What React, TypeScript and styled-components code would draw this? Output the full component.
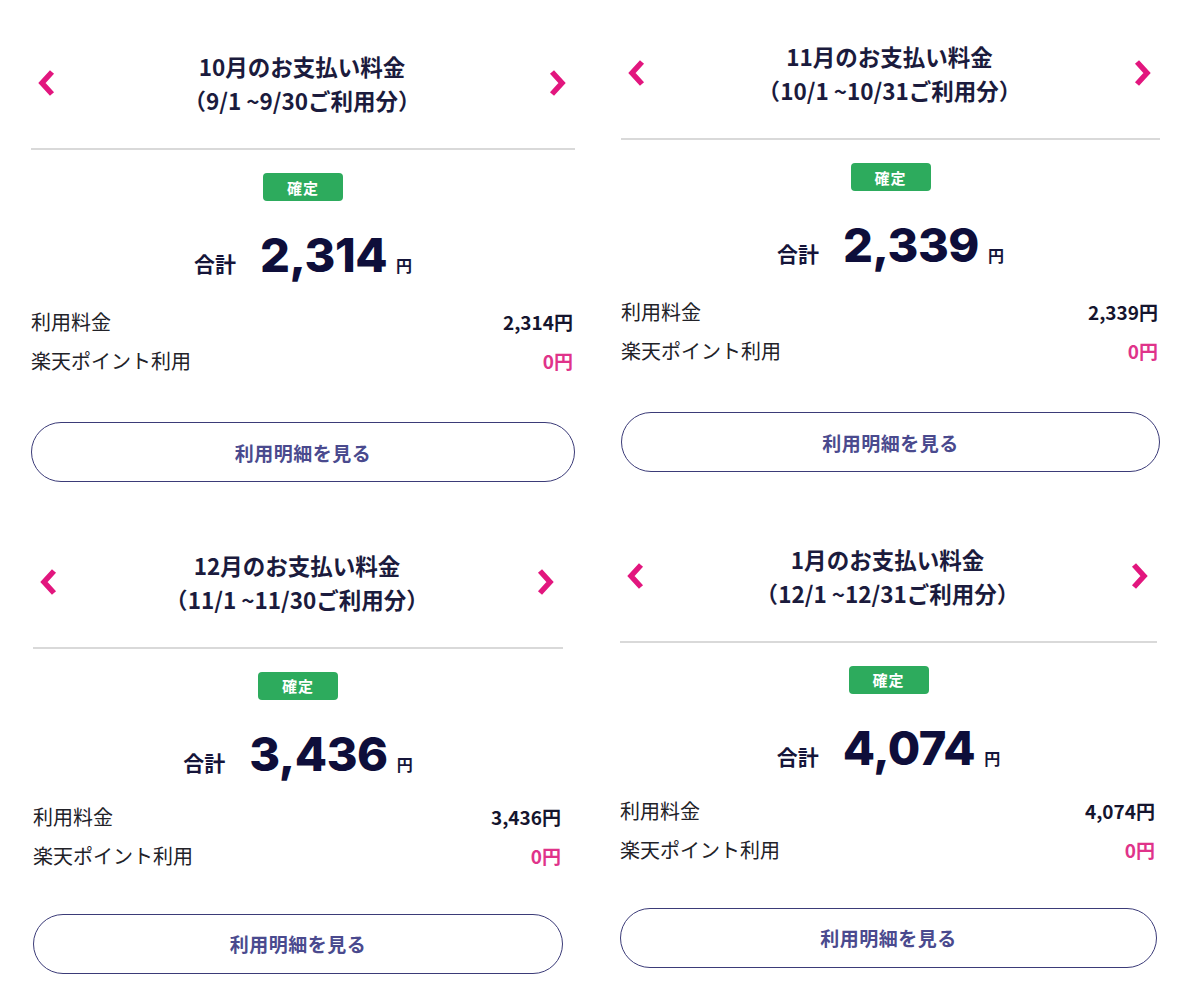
import React from 'react';
import styled, { createGlobalStyle } from 'styled-components';

// Global reset - white page, Japanese font by default
const GlobalStyle = createGlobalStyle`
  html, body {
    margin: 0;
    padding: 0;
    background: #ffffff;
  }
  body {
    font-family: "Noto Sans CJK JP", "Noto Sans", sans-serif;
    color: #1b1b3d;
  }
  * { box-sizing: border-box; }
`;

const PINK = '#e2167e';

// Page grid
const Page = styled.div`
  width: 1200px;
  height: 1000px;
  padding: 39px 0 0 31px;
  display: grid;
  grid-template-columns: 544px 539px;
  column-gap: 46px;
  row-gap: 33px;
  align-items: start;
`;

// One bill card
const Card = styled.section<{ $width: number; $dx: number; $dy: number }>`
  width: ${({ $width }) => $width}px;
  margin-left: ${({ $dx }) => $dx}px;
  margin-top: ${({ $dy }) => $dy}px;
  display: flex;
  flex-direction: column;
`;

// Header with prev/next chevrons around the title
const Header = styled.div`
  display: flex;
  align-items: center;
  justify-content: space-between;
  padding: 0 8px 0 6px;
`;

const NavButton = styled.button`
  width: 19px;
  height: 28px;
  padding: 0;
  border: none;
  background: none;
  display: flex;
  align-items: center;
  justify-content: center;
  cursor: pointer;
`;

const Title = styled.h2`
  margin: 0;
  flex: 1;
  text-align: center;
  font-size: 22.5px;
  line-height: 34px;
  font-weight: 700;
  color: #1b1b3d;
`;

const Divider = styled.hr`
  margin: 31px 0 0;
  border: none;
  height: 2px;
  background: #d9d9d9;
`;

const BadgeRow = styled.div`
  display: flex;
  justify-content: center;
  margin-top: 23px;
`;

const Badge = styled.span`
  width: 80px;
  height: 28px;
  border-radius: 4px;
  background: #2dab5d;
  color: #ffffff;
  font-size: 15px;
  font-weight: 700;
  letter-spacing: 1px;
  display: flex;
  align-items: center;
  justify-content: center;
`;

// 合計 line
const TotalRow = styled.div`
  margin-top: 28px;
  height: 52px;
  display: flex;
  align-items: baseline;
  justify-content: center;
`;

const TotalLabel = styled.span`
  font-size: 21px;
  font-weight: 700;
  color: #15153a;
  margin-right: 24px;
`;

const TotalAmount = styled.span`
  font-family: Inter, "Noto Sans", sans-serif;
  font-size: 47px;
  font-weight: 800;
  letter-spacing: -0.5px;
  color: #0e0e3a;
  line-height: 52px;
`;

const TotalYen = styled.span`
  font-size: 16px;
  font-weight: 700;
  color: #15153a;
  margin-left: 9px;
`;

// Breakdown rows
const Breakdown = styled.div<{ $compact?: boolean }>`
  margin-top: ${({ $compact }) => ($compact ? 17 : 21)}px;
  display: flex;
  flex-direction: column;
`;

const Line = styled.div`
  height: 39px;
  display: flex;
  align-items: center;
  justify-content: space-between;
  padding-right: 2px;
`;

const LineLabel = styled.span`
  font-size: 20px;
  font-weight: 400;
  color: #222228;
`;

const LineValue = styled.span<{ $pink?: boolean }>`
  font-size: 19px;
  font-weight: 700;
  color: ${({ $pink }) => ($pink ? '#e0338a' : '#15152e')};
`;

const DetailButton = styled.button<{ $compact?: boolean }>`
  margin-top: ${({ $compact }) => ($compact ? 39 : 42)}px;
  height: 60px;
  width: 100%;
  border: 1.5px solid #3b3b78;
  border-radius: 30px;
  background: #ffffff;
  color: #4a4a8e;
  font-family: "Noto Sans CJK JP", sans-serif;
  font-size: 19px;
  font-weight: 700;
  letter-spacing: 0.5px;
  cursor: pointer;
`;

const Chevron = ({ dir }: { dir: 'left' | 'right' }) => (
  <svg width="19" height="28" viewBox="0 0 19 28">
    <polyline
      points={dir === 'left' ? '15,3 5,14 15,25' : '4,3 14,14 4,25'}
      fill="none"
      stroke={PINK}
      strokeWidth="5.5"
      strokeLinejoin="miter"
    />
  </svg>
);

type Bill = {
  month: string;
  period: string;
  total: string;
  width: number;
  dx: number;
  dy: number;
  compact?: boolean;
};

const bills: Bill[] = [
  { month: '10月', period: '9/1 ~9/30', total: '2,314', width: 544, dx: 0, dy: 10 },
  { month: '11月', period: '10/1 ~10/31', total: '2,339', width: 539, dx: 0, dy: 0 },
  { month: '12月', period: '11/1 ~11/30', total: '3,436', width: 530, dx: 2, dy: 6, compact: true },
  { month: '1月', period: '12/1 ~12/31', total: '4,074', width: 537, dx: -1, dy: 0, compact: true },
];

const BillCard = ({ bill }: { bill: Bill }) => (
  <Card $width={bill.width} $dx={bill.dx} $dy={bill.dy}>
    <Header>
      <NavButton aria-label="前月">
        <Chevron dir="left" />
      </NavButton>
      <Title>
        {bill.month}のお支払い料金
        <br />（{bill.period}ご利用分）
      </Title>
      <NavButton aria-label="翌月">
        <Chevron dir="right" />
      </NavButton>
    </Header>
    <Divider />
    <BadgeRow>
      <Badge>確定</Badge>
    </BadgeRow>
    <TotalRow>
      <TotalLabel>合計</TotalLabel>
      <TotalAmount>{bill.total}</TotalAmount>
      <TotalYen>円</TotalYen>
    </TotalRow>
    <Breakdown $compact={bill.compact}>
      <Line>
        <LineLabel>利用料金</LineLabel>
        <LineValue>{bill.total}円</LineValue>
      </Line>
      <Line>
        <LineLabel>楽天ポイント利用</LineLabel>
        <LineValue $pink>0円</LineValue>
      </Line>
    </Breakdown>
    <DetailButton $compact={bill.compact}>利用明細を見る</DetailButton>
  </Card>
);

export default function App() {
  return (
    <>
      <GlobalStyle />
      <Page>
        {bills.map((b) => (
          <BillCard key={b.month} bill={b} />
        ))}
      </Page>
    </>
  );
}
